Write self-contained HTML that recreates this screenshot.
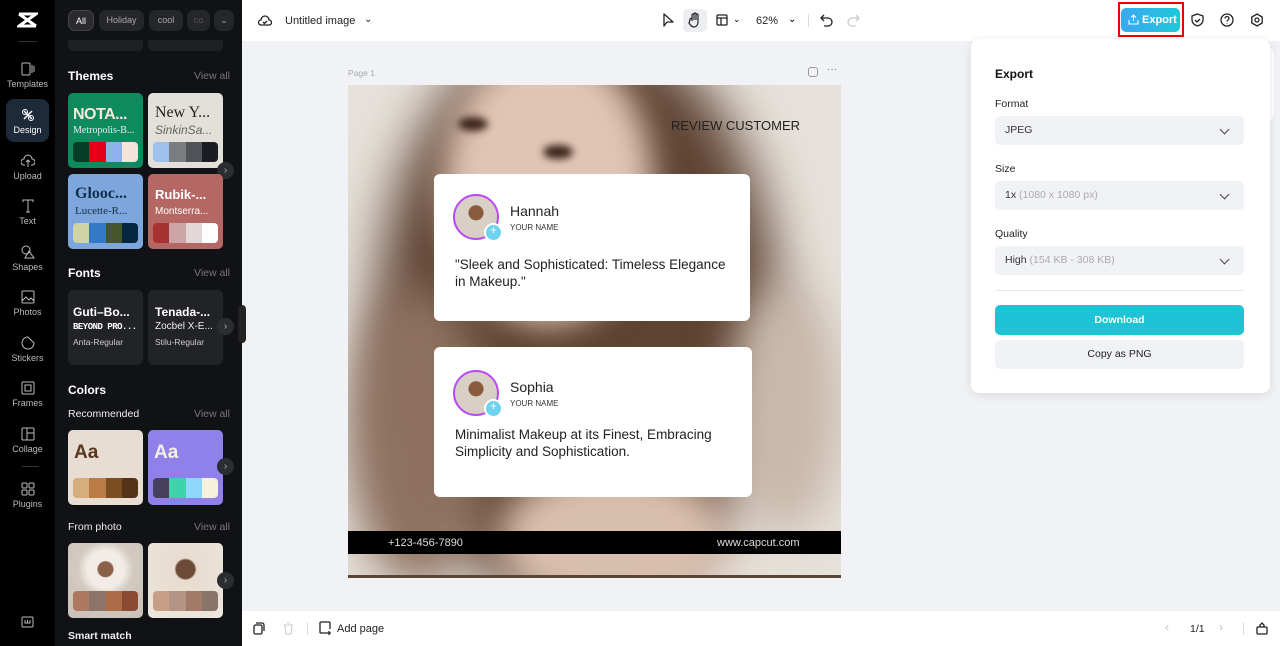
<!DOCTYPE html>
<html><head><meta charset="utf-8"><style>
*{box-sizing:border-box;margin:0;padding:0}
body{width:1280px;height:646px;overflow:hidden;font-family:"Liberation Sans",sans-serif;background:#f0f2f5;position:relative}
.abs{position:absolute}
.rail{left:0;top:0;width:55px;height:646px;background:#000}
.ri{position:absolute;left:0;width:55px;text-align:center;color:#bbb;font-size:9px}
.ri svg{display:block;margin:0 auto 3px}
.panel{left:55px;top:0;width:187px;height:646px;background:#111215}
.chip{position:absolute;top:10px;height:21px;border-radius:7px;background:#25262a;color:#aaa;font-size:9px;line-height:21px;text-align:center}
.h{position:absolute;left:68px;color:#fff;font-size:12px;font-weight:bold}
.va{position:absolute;right:12px;color:#777;font-size:10.5px}
.card{position:absolute;width:75px;height:75px;border-radius:5px;overflow:hidden;white-space:nowrap}
.sw{position:absolute;left:5px;right:5px;height:20px;border-radius:4px;overflow:hidden;display:flex}
.sw i{flex:1}
.arr{position:absolute;width:17px;height:17px;border-radius:50%;background:#2c2d31;color:#aaa;font-size:10px;line-height:17px;text-align:center}
.top{left:242px;top:0;width:1038px;height:41px;background:#fff}
.bot{left:242px;top:611px;width:1038px;height:35px;background:#fff}
.img{left:348px;top:85px;width:493px;height:493px;overflow:hidden;background:#e6e1da}
.blob{position:absolute;border-radius:50%}
.tc{position:absolute;background:#fff;border-radius:6px}
.av{position:absolute;left:19px;width:46px;height:46px;border-radius:50%;border:2px solid #b54df0;background:radial-gradient(circle at 50% 40%,#8a5a3c 0 22%,#d8cfc5 24%)}
.av:after{content:"+";position:absolute;right:-6px;bottom:-4px;width:15px;height:15px;border-radius:50%;background:#6fd3ef;border:2px solid #fff;color:#fff;font-size:12px;line-height:11px;text-align:center}
.nm{position:absolute;left:76px;font-size:14px;color:#222}
.yn{position:absolute;left:76px;font-size:8px;color:#333}
.q{position:absolute;left:21px;font-size:13.5px;color:#222;line-height:17px}
.exp{left:971px;top:39px;width:299px;height:354px;background:#fff;border-radius:8px;box-shadow:0 2px 10px rgba(0,0,0,.1)}
.lbl{position:absolute;left:24px;font-size:10.5px;color:#222}
.sel{position:absolute;left:24px;width:249px;height:29px;background:#f0f2f5;border-radius:5px;font-size:10.5px;color:#333;line-height:29px;padding-left:10px}
.sel span{color:#aaa}
.sel:after{content:"";position:absolute;right:16px;top:10px;width:6px;height:6px;border-right:1.5px solid #444;border-bottom:1.5px solid #444;transform:rotate(45deg)}
</style></head><body>
<div class="abs rail">
 <svg class="abs" style="left:17px;top:11px" width="21" height="18" viewBox="0 0 21 18"><path d="M2 3h17L2 15h17M2 3l17 12" stroke="#fff" stroke-width="3" fill="none"/></svg>
 <div class="abs" style="left:18px;top:41px;width:19px;height:1px;background:#333"></div>
 <div class="ri" style="top:62px"><svg width="14" height="14" viewBox="0 0 14 14"><rect x="1" y="1" width="8" height="12" rx="1" stroke="#bbb" fill="none"/><path d="M11 3v8M13 4v6" stroke="#bbb"/></svg>Templates</div>
 <div class="abs" style="left:6px;top:99px;width:43px;height:43px;border-radius:8px;background:#1c2a3a"></div>
 <div class="ri" style="top:108px;color:#fff"><svg width="14" height="14" viewBox="0 0 14 14"><path d="M3 3l8 8M11 3l-8 8" stroke="#fff" stroke-width="1.5"/><circle cx="4" cy="4" r="2.5" stroke="#fff" fill="none"/><circle cx="10" cy="10" r="2.5" stroke="#fff" fill="none"/></svg>Design</div>
 <div class="ri" style="top:154px"><svg width="14" height="14" viewBox="0 0 14 14"><path d="M4 11H3a3 3 0 010-6 4 4 0 018 0 3 3 0 010 6h-1M7 13V6M5 8l2-2 2 2" stroke="#bbb" fill="none"/></svg>Upload</div>
 <div class="ri" style="top:199px"><svg width="14" height="14" viewBox="0 0 14 14"><path d="M2 3V1h10v2M7 1v12M5 13h4" stroke="#bbb" fill="none"/></svg>Text</div>
 <div class="ri" style="top:245px"><svg width="14" height="14" viewBox="0 0 14 14"><circle cx="5" cy="5" r="4" stroke="#bbb" fill="none"/><path d="M8 6l5 7H4z" stroke="#bbb" fill="none"/></svg>Shapes</div>
 <div class="ri" style="top:290px"><svg width="14" height="14" viewBox="0 0 14 14"><rect x="1" y="1" width="12" height="12" rx="1" stroke="#bbb" fill="none"/><path d="M1 11l4-4 3 3 2-2 3 3" stroke="#bbb" fill="none"/></svg>Photos</div>
 <div class="ri" style="top:336px"><svg width="14" height="14" viewBox="0 0 14 14"><path d="M13 7A6 6 0 117 1l6 6z" stroke="#bbb" fill="none"/></svg>Stickers</div>
 <div class="ri" style="top:381px"><svg width="14" height="14" viewBox="0 0 14 14"><rect x="1" y="1" width="12" height="12" rx="1" stroke="#bbb" fill="none"/><rect x="4" y="4" width="6" height="6" stroke="#bbb" fill="none"/></svg>Frames</div>
 <div class="ri" style="top:427px"><svg width="14" height="14" viewBox="0 0 14 14"><rect x="1" y="1" width="12" height="12" rx="1" stroke="#bbb" fill="none"/><path d="M6 1v12M6 6h7" stroke="#bbb"/></svg>Collage</div>
 <div class="abs" style="left:22px;top:466px;width:17px;height:1px;background:#333"></div>
 <div class="ri" style="top:482px"><svg width="14" height="14" viewBox="0 0 14 14"><rect x="1" y="1" width="5" height="5" rx="1" stroke="#bbb" fill="none"/><rect x="8" y="1" width="5" height="5" rx="1" stroke="#bbb" fill="none"/><rect x="1" y="8" width="5" height="5" rx="1" stroke="#bbb" fill="none"/><rect x="8" y="8" width="5" height="5" rx="1" stroke="#bbb" fill="none"/></svg>Plugins</div>
 <svg class="abs" style="left:21px;top:616px" width="13" height="12" viewBox="0 0 13 12"><rect x="1" y="1" width="11" height="10" rx="1" stroke="#bbb" fill="none"/><path d="M4 4v3h5V4M6.5 4v3" stroke="#bbb"/></svg>
</div>
<div class="abs panel"></div>
<div class="chip" style="left:68px;width:26px;background:#2a2b30;border:1px solid #444;color:#fff">All</div>
<div class="chip" style="left:99px;width:45px">Holiday</div>
<div class="chip" style="left:149px;width:34px">cool</div>
<div class="chip" style="left:187px;width:23px;color:#555">co</div>
<div class="chip" style="left:214px;width:20px">⌄</div>
<div class="abs" style="left:68px;top:40px;width:75px;height:11px;background:#1f2024;border-radius:0 0 5px 5px"></div>
<div class="abs" style="left:148px;top:40px;width:75px;height:11px;background:#1f2024;border-radius:0 0 5px 5px"></div>
<div class="h" style="top:69px">Themes</div><div class="va" style="left:194px;top:70px">View all</div>
<div class="card" style="left:68px;top:93px;background:#0d8a5e"><div class="abs" style="left:5px;top:13px;color:#fbe9dd;font:900 16px 'Liberation Sans',sans-serif;letter-spacing:-0.5px">NOTA...</div><div class="abs" style="left:5px;top:32px;color:#eee;font:10px 'Liberation Serif',serif">Metropolis-B...</div><div class="sw" style="top:49px"><i style="background:#053d27"></i><i style="background:#e5001a"></i><i style="background:#8fb2ec"></i><i style="background:#f5e3d9"></i></div></div>
<div class="card" style="left:148px;top:93px;background:#e3dfd9"><div class="abs" style="left:7px;top:11px;color:#222;font:16px 'Liberation Serif',serif">New Y...</div><div class="abs" style="left:7px;top:30px;color:#666;font:italic 12px 'Liberation Sans',sans-serif">SinkinSa...</div><div class="sw" style="top:49px"><i style="background:#9dc1ec"></i><i style="background:#7a7d80"></i><i style="background:#505358"></i><i style="background:#1b1d22"></i></div></div>
<div class="arr" style="left:217px;top:162px">›</div>
<div class="card" style="left:68px;top:174px;background:#7ca6dc"><div class="abs" style="left:7px;top:11px;color:#12304c;font:bold 16px 'Liberation Serif',serif">Glooc...</div><div class="abs" style="left:7px;top:31px;color:#12304c;font:11px 'Liberation Serif',serif">Lucette-R...</div><div class="sw" style="top:49px"><i style="background:#ced4a4"></i><i style="background:#3478c8"></i><i style="background:#47552c"></i><i style="background:#062641"></i></div></div>
<div class="card" style="left:148px;top:174px;background:#b56763"><div class="abs" style="left:7px;top:13px;color:#fff;font:bold 13px 'Liberation Sans',sans-serif">Rubik-...</div><div class="abs" style="left:7px;top:32px;color:#fff;font:10px 'Liberation Sans',sans-serif">Montserra...</div><div class="sw" style="top:49px"><i style="background:#a83232"></i><i style="background:#cca6a6"></i><i style="background:#e2d6d6"></i><i style="background:#fff"></i></div></div>
<div class="h" style="top:266px">Fonts</div><div class="va" style="left:194px;top:267px">View all</div>
<div class="card" style="left:68px;top:290px;background:#222327;height:75px"><div class="abs" style="left:5px;top:15px;color:#fff;font:bold 12px 'Liberation Sans',sans-serif">Guti–Bo...</div><div class="abs" style="left:5px;top:32px;color:#fff;font:bold 9px 'Liberation Mono',monospace;letter-spacing:-0.5px">BEYOND PRO...</div><div class="abs" style="left:5px;top:47px;color:#ccc;font:8.5px sans-serif">Anta-Regular</div></div>
<div class="card" style="left:148px;top:290px;background:#222327"><div class="abs" style="left:7px;top:15px;color:#fff;font:bold 12px sans-serif">Tenada-...</div><div class="abs" style="left:7px;top:31px;color:#eee;font:10px sans-serif">Zocbel X-E...</div><div class="abs" style="left:7px;top:47px;color:#ccc;font:8.5px sans-serif">Stilu-Regular</div></div>
<div class="arr" style="left:217px;top:318px">›</div>
<div class="h" style="top:383px">Colors</div>
<div class="abs" style="left:68px;top:408px;color:#eee;font-size:10.5px">Recommended</div><div class="va" style="left:194px;top:408px">View all</div>
<div class="card" style="left:68px;top:430px;background:#e8ddd2"><div class="abs" style="left:6px;top:12px;color:#5a3520;font:bold 19px sans-serif">Aa</div><div class="sw" style="top:48px"><i style="background:#d6ad7d"></i><i style="background:#b97c45"></i><i style="background:#7d4d22"></i><i style="background:#553318"></i></div></div>
<div class="card" style="left:148px;top:430px;background:#9080ea"><div class="abs" style="left:6px;top:12px;color:#f4f0e0;font:bold 19px sans-serif">Aa</div><div class="sw" style="top:48px"><i style="background:#473f5e"></i><i style="background:#3ed3aa"></i><i style="background:#8ed8fb"></i><i style="background:#f4f0dc"></i></div></div>
<div class="arr" style="left:217px;top:458px">›</div>
<div class="abs" style="left:68px;top:521px;color:#eee;font-size:10.5px">From photo</div><div class="va" style="left:194px;top:521px">View all</div>
<div class="card" style="left:68px;top:543px;background:radial-gradient(circle at 50% 35%,#8a6048 0 12%,#f2ece6 14% 30%,#d3cbc2 45%,#c8bfb6)"><div class="sw" style="top:48px"><i style="background:#ad7760"></i><i style="background:#8e7468"></i><i style="background:#ac6c48"></i><i style="background:#894b33"></i></div></div>
<div class="card" style="left:148px;top:543px;background:radial-gradient(circle at 50% 35%,#6b4a38 0 15%,#e8dccf 18%,#ece7df)"><div class="sw" style="top:48px"><i style="background:#c79f87"></i><i style="background:#b39585"></i><i style="background:#a17b67"></i><i style="background:#887469"></i></div></div>
<div class="arr" style="left:217px;top:572px">›</div>
<div class="abs" style="left:68px;top:630px;color:#eee;font-size:10.5px;font-weight:bold">Smart match</div>
<div class="abs" style="left:238px;top:305px;width:8px;height:38px;background:#222;border-radius:4px"></div>

<div class="abs top"></div>
<svg class="abs" style="left:258px;top:14px" width="14" height="13" viewBox="0 0 14 13"><path d="M4 11H3a2.5 2.5 0 010-5 4 4 0 018 0 2.5 2.5 0 010 5H4zM5 8l1.5 1.5L9 7" stroke="#222" stroke-width="1.3" fill="none"/></svg>
<div class="abs" style="left:285px;top:15px;font-size:11px;color:#222">Untitled image</div>
<div class="abs" style="left:364px;top:14px;font-size:10px;color:#222">⌄</div>
<svg class="abs" style="left:662px;top:13px" width="12" height="14" viewBox="0 0 12 14"><path d="M2 1v12l3-4h6z" stroke="#222" stroke-width="1.3" fill="none" stroke-linejoin="round"/></svg>
<div class="abs" style="left:683px;top:9px;width:24px;height:23px;background:#eceef1;border-radius:5px"></div>
<svg class="abs" style="left:688px;top:12px" width="14" height="16" viewBox="0 0 14 16"><path d="M4 9V3a1 1 0 012 0v5V2a1 1 0 012 0v6V3a1 1 0 012 0v7c0 3-2 5-4 5s-3-1-5-4L2 8a1 1 0 012-1" stroke="#222" stroke-width="1.2" fill="none"/></svg>
<svg class="abs" style="left:716px;top:14px" width="12" height="12" viewBox="0 0 12 12"><rect x="1" y="1" width="10" height="10" rx="1" stroke="#222" stroke-width="1.3" fill="none"/><path d="M1 4h10M5 4v7" stroke="#222" stroke-width="1.3"/></svg>
<div class="abs" style="left:733px;top:14px;font-size:9px">⌄</div>
<div class="abs" style="left:756px;top:15px;font-size:11px;color:#222">62%</div>
<div class="abs" style="left:788px;top:14px;font-size:10px">⌄</div>
<div class="abs" style="left:808px;top:14px;width:1px;height:13px;background:#ddd"></div>
<svg class="abs" style="left:820px;top:13px" width="13" height="14" viewBox="0 0 13 14"><path d="M4 2L1 5l3 3M1 5h7a4 4 0 010 8H4" stroke="#222" stroke-width="1.3" fill="none"/></svg>
<svg class="abs" style="left:847px;top:13px" width="13" height="14" viewBox="0 0 13 14"><path d="M9 2l3 3-3 3M12 5H5a4 4 0 000 8h4" stroke="#ccc" stroke-width="1.3" fill="none"/></svg>
<div class="abs" style="left:1118px;top:2px;width:66px;height:35px;border:2px solid #e00"></div>
<div class="abs" style="left:1121px;top:8px;width:59px;height:24px;border-radius:5px;background:linear-gradient(90deg,#3aa8f0,#1fc8da);color:#fff;font-size:11px;font-weight:bold;line-height:24px;padding-left:21px">Export</div>
<svg class="abs" style="left:1128px;top:14px" width="11" height="11" viewBox="0 0 11 11"><path d="M5.5 7V1M3 3.5L5.5 1 8 3.5M1 6v4h9V6" stroke="#fff" stroke-width="1.1" fill="none"/></svg>
<svg class="abs" style="left:1191px;top:13px" width="13" height="14" viewBox="0 0 13 14"><path d="M6.5 1L12 3v4c0 3-2.5 5-5.5 6C3.5 12 1 10 1 7V3z M4 7l2 2 3-3" stroke="#222" stroke-width="1.3" fill="none"/></svg>
<svg class="abs" style="left:1220px;top:13px" width="14" height="14" viewBox="0 0 14 14"><circle cx="7" cy="7" r="6" stroke="#222" stroke-width="1.3" fill="none"/><path d="M5 5.5a2 2 0 114 0c0 1.5-2 1.5-2 3M7 10.2v.6" stroke="#222" stroke-width="1.3" fill="none"/></svg>
<svg class="abs" style="left:1250px;top:13px" width="14" height="14" viewBox="0 0 14 14"><path d="M7 1l5.2 3v6L7 13 1.8 10V4z" stroke="#222" stroke-width="1.3" fill="none"/><circle cx="7" cy="7" r="2" stroke="#222" stroke-width="1.3" fill="none"/></svg>

<div class="abs" style="left:348px;top:68px;font-size:8.5px;color:#aaa">Page 1</div>
<div class="abs" style="left:808px;top:67px;width:10px;height:10px;border:1.5px solid #999;border-radius:3px"></div>
<div class="abs" style="left:827px;top:64px;font-size:10px;color:#777">···</div>

<div class="abs img">
 <div class="blob" style="left:30px;top:-60px;width:400px;height:580px;background:#5e4232;filter:blur(26px)"></div>
 <div class="blob" style="left:0;top:200px;width:140px;height:300px;background:#8e7160;filter:blur(22px)"></div>
 <div class="blob" style="left:380px;top:200px;width:113px;height:250px;background:#c8b8aa;filter:blur(22px)"></div>
 <div class="blob" style="left:95px;top:-40px;width:210px;height:280px;background:#e0c5b4;filter:blur(16px)"></div>
 <div class="blob" style="left:150px;top:380px;width:230px;height:150px;background:#d9bfae;filter:blur(18px)"></div>
 <div class="blob" style="left:110px;top:32px;width:30px;height:14px;background:#3a2218;filter:blur(4px)"></div>
 <div class="blob" style="left:195px;top:60px;width:30px;height:14px;background:#3a2218;filter:blur(4px)"></div>
 <div class="abs" style="left:323px;top:33px;font-size:13px;color:#222">REVIEW CUSTOMER</div>
 <div class="tc" style="left:86px;top:89px;width:316px;height:147px">
  <div class="av" style="top:20px"></div>
  <div class="nm" style="top:29px">Hannah</div><div class="yn" style="top:49px">YOUR NAME</div>
  <div class="q" style="top:82px">"Sleek and Sophisticated: Timeless Elegance<br>in Makeup."</div>
 </div>
 <div class="tc" style="left:86px;top:262px;width:318px;height:150px">
  <div class="av" style="top:23px"></div>
  <div class="nm" style="top:32px">Sophia</div><div class="yn" style="top:52px">YOUR NAME</div>
  <div class="q" style="top:79px">Minimalist Makeup at its Finest, Embracing<br>Simplicity and Sophistication.</div>
 </div>
 <div class="abs" style="left:0;top:446px;width:493px;height:23px;background:#000"></div>
 <div class="abs" style="left:40px;top:452px;color:#ddd;font-size:11px">+123-456-7890</div>
 <div class="abs" style="left:369px;top:452px;color:#ddd;font-size:11px">www.capcut.com</div>
 <div class="abs" style="left:0;top:490px;width:493px;height:3px;background:#5e4438"></div>
</div>

<div class="abs" style="left:1262px;top:48px;width:12px;height:72px;background:#fff;border-radius:0 6px 6px 0"></div>
<div class="abs exp">
 <div class="abs" style="left:24px;top:28px;font-size:12px;font-weight:bold;color:#111">Export</div>
 <div class="lbl" style="top:59px">Format</div>
 <div class="sel" style="top:77px">JPEG</div>
 <div class="lbl" style="top:124px">Size</div>
 <div class="sel" style="top:142px">1x <span>(1080 x 1080 px)</span></div>
 <div class="lbl" style="top:189px">Quality</div>
 <div class="sel" style="top:207px">High <span>(154 KB - 308 KB)</span></div>
 <div class="abs" style="left:24px;top:251px;width:249px;height:1px;background:#e8e8e8"></div>
 <div class="abs" style="left:24px;top:266px;width:249px;height:30px;border-radius:5px;background:#1fc3d6;color:#fff;font-size:10.5px;font-weight:bold;text-align:center;line-height:30px">Download</div>
 <div class="abs" style="left:24px;top:301px;width:249px;height:29px;border-radius:5px;background:#f0f2f5;color:#222;font-size:10.5px;text-align:center;line-height:29px">Copy as PNG</div>
</div>

<div class="abs bot"></div>
<svg class="abs" style="left:253px;top:622px" width="12" height="13" viewBox="0 0 12 13"><rect x="1" y="3" width="8" height="9" rx="1.5" stroke="#222" stroke-width="1.3" fill="none"/><path d="M3 1h6a2 2 0 012 2v6" stroke="#222" stroke-width="1.3" fill="none"/></svg>
<svg class="abs" style="left:283px;top:622px" width="11" height="13" viewBox="0 0 11 13"><path d="M1 3h9M4 1h3M2 3l1 9h5l1-9" stroke="#ccc" stroke-width="1.1" fill="none"/></svg>
<div class="abs" style="left:307px;top:622px;width:1px;height:13px;background:#ddd"></div>
<svg class="abs" style="left:319px;top:621px" width="13" height="14" viewBox="0 0 13 14"><path d="M8 12H2a1 1 0 01-1-1V2a1 1 0 011-1h8a1 1 0 011 1v6M10 10v4M8 12h4" stroke="#222" stroke-width="1.3" fill="none"/></svg>
<div class="abs" style="left:337px;top:623px;font-size:11px;color:#222">Add page</div>
<div class="abs" style="left:1165px;top:620px;font-size:12px;color:#bbb">‹</div>
<div class="abs" style="left:1190px;top:623px;font-size:10.5px;color:#222">1/1</div>
<div class="abs" style="left:1219px;top:620px;font-size:12px;color:#bbb">›</div>
<div class="abs" style="left:1243px;top:622px;width:1px;height:13px;background:#ddd"></div>
<svg class="abs" style="left:1256px;top:621px" width="12" height="14" viewBox="0 0 12 14"><rect x="1" y="6" width="10" height="7" rx="1" stroke="#222" stroke-width="1.3" fill="none"/><path d="M4 6V4l2-2 2 2v2" stroke="#222" stroke-width="1.3" fill="none"/></svg>
</body></html>
